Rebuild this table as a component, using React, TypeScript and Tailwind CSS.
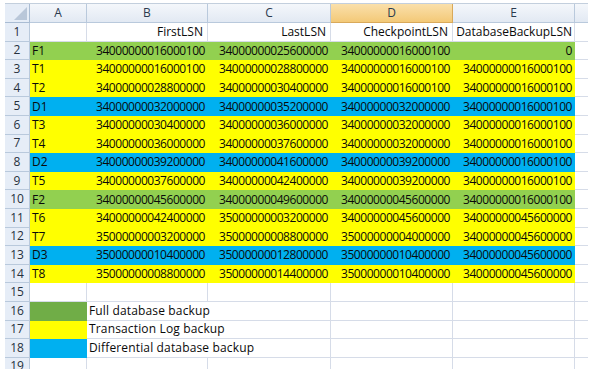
import React from "react";

type Kind = "g" | "y" | "b";
const rows: [string, Kind, string, string, string, string][] = [
  ["F1", "g", "34000000016000100", "34000000025600000", "34000000016000100", "0"],
  ["T1", "y", "34000000016000100", "34000000028800000", "34000000016000100", "34000000016000100"],
  ["T2", "y", "34000000028800000", "34000000030400000", "34000000016000100", "34000000016000100"],
  ["D1", "b", "34000000032000000", "34000000035200000", "34000000032000000", "34000000016000100"],
  ["T3", "y", "34000000030400000", "34000000036000000", "34000000032000000", "34000000016000100"],
  ["T4", "y", "34000000036000000", "34000000037600000", "34000000032000000", "34000000016000100"],
  ["D2", "b", "34000000039200000", "34000000041600000", "34000000039200000", "34000000016000100"],
  ["T5", "y", "34000000037600000", "34000000042400000", "34000000039200000", "34000000016000100"],
  ["F2", "g", "34000000045600000", "34000000049600000", "34000000045600000", "34000000016000100"],
  ["T6", "y", "34000000042400000", "35000000003200000", "34000000045600000", "34000000045600000"],
  ["T7", "y", "35000000003200000", "35000000008800000", "35000000004000000", "34000000045600000"],
  ["D3", "b", "35000000010400000", "35000000012800000", "35000000010400000", "34000000045600000"],
  ["T8", "y", "35000000008800000", "35000000014400000", "35000000010400000", "34000000045600000"],
];

const bg: Record<Kind, string> = {
  g: "bg-[#92d050]",
  y: "bg-[#ffff00]",
  b: "bg-[#00b0f0]",
};

const COLS = "grid grid-cols-[25px_57px_121px_123px_122px_122px_13px]";
const RH = "h-[18.6px]";
const GRID = "border-r border-b border-[#d6dce8]";

function RowNum({ n }: { n: number }) {
  return (
    <div className="flex items-center justify-center bg-[#e6edf7] border-r border-b border-[#b9c9dc] text-[#27313d] text-[12px]">
      {n}
    </div>
  );
}

export default function App() {
  return (
    <div
      className="w-[602px] h-[375px] bg-white pl-[5px] pt-[3px] text-[12px] leading-none text-[#0a0a0a]"
      style={{ fontFamily: "'Open Sans', Lato, sans-serif" }}
    >
      <div className="w-[583px] h-[366px] overflow-hidden">
        {/* header */}
        <div className={`${COLS} h-[20px] text-[#2b3a4e] border-t border-[#c3cfdd]`}>
          <div className="relative bg-[#e6edf7] border-r border-b border-[#a9bcd3]">
            <svg className="absolute right-[2px] bottom-[2px]" width="13" height="13" viewBox="0 0 13 13">
              <polygon points="13,0 13,13 0,13" fill="#b9c7d9" />
            </svg>
          </div>
          {["A", "B", "C"].map((l) => (
            <div key={l} className="flex items-center justify-center bg-gradient-to-b from-[#f4f7fb] to-[#e2e9f3] border-r border-b border-[#b9c9dc]">
              {l}
            </div>
          ))}
          <div className="flex items-center justify-center bg-gradient-to-b from-[#fae0ab] to-[#f3c977] border-r border-b border-[#d9a95a]">
            D
          </div>
          <div className="flex items-center justify-center bg-gradient-to-b from-[#f4f7fb] to-[#e2e9f3] border-r border-b border-[#b9c9dc]">
            E
          </div>
          <div className="bg-gradient-to-b from-[#f4f7fb] to-[#e2e9f3] border-b border-[#b9c9dc]" />
        </div>

        {/* row 1 */}
        <div className={`${COLS} ${RH}`}>
          <RowNum n={1} />
          <div className={GRID} />
          <div className={`${GRID} flex items-center justify-end pr-[4px]`}>FirstLSN</div>
          <div className={`${GRID} flex items-center justify-end pr-[4px]`}>LastLSN</div>
          <div className={`${GRID} flex items-center justify-end pr-[4px]`}>CheckpointLSN</div>
          <div className={`${GRID} flex items-center justify-end pr-[2px] whitespace-nowrap`}>DatabaseBackupLSN</div>
          <div className="border-b border-[#d6dce8]" />
        </div>

        {rows.map((r, i) => (
          <div key={r[0]} className={`${COLS} ${RH}`}>
            <RowNum n={i + 2} />
            <div className={`${bg[r[1]]} flex items-center pl-[2px] font-medium`}>{r[0]}</div>
            {[r[2], r[3], r[4], r[5]].map((v, j) => (
              <div key={j} className={`${bg[r[1]]} flex items-center justify-end pr-[3px] tracking-[-0.45px]`}>
                {v}
              </div>
            ))}
            <div className="border-b border-[#d6dce8]" />
          </div>
        ))}

        {/* row 15 */}
        <div className={`${COLS} ${RH}`}>
          <RowNum n={15} />
          <div className={GRID} />
          <div className={GRID} />
          <div className={GRID} />
          <div className={GRID} />
          <div className={GRID} />
          <div className="border-b border-[#d6dce8]" />
        </div>

        {[
          [16, "bg-[#70ad47]", "Full database backup"],
          [17, "bg-[#ffff00]", "Transaction Log backup"],
          [18, "bg-[#00b0f0]", "Differential database backup"],
        ].map(([n, c, t]) => (
          <div key={n as number} className={`${COLS} ${RH}`}>
            <RowNum n={n as number} />
            <div className={`${c as string}`} />
            <div className="border-b border-[#d6dce8] flex items-center pl-[2px] whitespace-nowrap overflow-visible relative z-10 tracking-[0.15px]">
              {t as string}
            </div>
            <div className={GRID} />
            <div className={GRID} />
            <div className={GRID} />
            <div className="border-b border-[#d6dce8]" />
          </div>
        ))}

        {/* row 19 */}
        <div className={`${COLS} ${RH}`}>
          <RowNum n={19} />
          <div className={GRID} />
          <div className={GRID} />
          <div className={GRID} />
          <div className={GRID} />
          <div className={GRID} />
          <div className="border-b border-[#d6dce8]" />
        </div>
      </div>
    </div>
  );
}
